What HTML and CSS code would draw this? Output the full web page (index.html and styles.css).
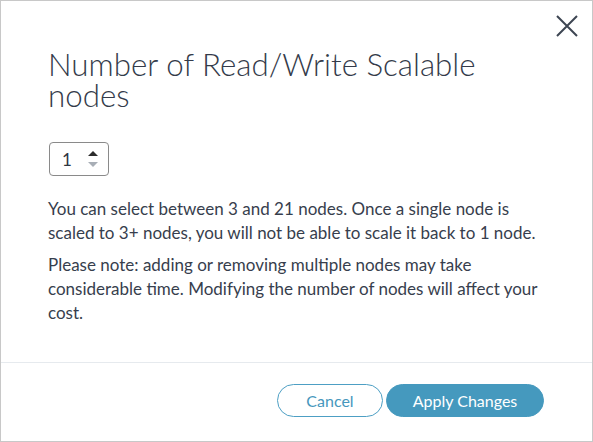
FILE: index.html
```html
<!DOCTYPE html>
<html>
<head>
<meta charset="utf-8">
<link rel="stylesheet" href="styles.css">
</head>
<body>
<div class="dialog">
  <div class="body">
    <button class="close" aria-label="Close">
      <svg width="22" height="22" viewBox="0 0 22 22"><path d="M1 1L21 21M21 1L1 21" stroke="#3d4552" stroke-width="2" fill="none"/></svg>
    </button>
    <h1 class="title">Number of Read/Write Scalable nodes</h1>
    <div class="stepper">
      <span class="value">1</span>
      <span class="arrows">
        <span class="up"></span>
        <span class="down"></span>
      </span>
    </div>
    <p class="text">You can select between 3 and 21 nodes. Once a single node is scaled to 3+ nodes, you will not be able to scale it back to 1 node.</p>
    <p class="text">Please note: adding or removing multiple nodes may take considerable time. Modifying the number of nodes will affect your cost.</p>
  </div>
  <div class="footer">
    <button class="btn btn-outline">Cancel</button>
    <button class="btn btn-primary">Apply Changes</button>
  </div>
</div>
</body>
</html>
```
FILE: styles.css
```css
html, body {
  margin: 0;
  padding: 0;
  background: #ffffff;
}
.dialog {
  width: 593px;
  height: 442px;
  box-sizing: border-box;
  border: 1px solid #c8c8c8;
  display: flex;
  flex-direction: column;
  font-family: Lato, "Open Sans", sans-serif;
  color: #3a4150;
}
.body {
  position: relative;
  flex: 1;
  padding: 48px 40px 0 47px;
}
.close {
  position: absolute;
  top: 14px;
  right: 14px;
  background: none;
  border: 0;
  padding: 0;
  width: 22px;
  height: 22px;
  display: flex;
}
.title {
  margin: 0;
  font-weight: 300;
  font-size: 31.3px;
  line-height: 31px;
  color: #343b4a;
  max-width: 460px;
}
.stepper {
  margin-top: 31px;
  width: 60px;
  height: 34px;
  box-sizing: border-box;
  border: 1px solid #8a8a8a;
  border-radius: 4px;
  display: flex;
  align-items: center;
  justify-content: space-between;
  padding: 0 10px 0 12px;
  margin-left: 1px;
}
.value {
  font-size: 17px;
  color: #2f3542;
}
.arrows {
  display: flex;
  flex-direction: column;
  gap: 6px;
}
.up {
  width: 0;
  height: 0;
  border-left: 5px solid transparent;
  border-right: 5px solid transparent;
  border-bottom: 5px solid #2c2c2c;
}
.down {
  width: 0;
  height: 0;
  border-left: 5px solid transparent;
  border-right: 5px solid transparent;
  border-top: 5px solid #a8aeb6;
}
.text {
  margin: 0;
  font-size: 17px;
  line-height: 24px;
  color: #373e4d;
}
.stepper + .text {
  margin-top: 21px;
}
.text + .text {
  margin-top: 8px;
}
.footer {
  height: 79px;
  border-top: 1px solid #e6eaee;
  display: flex;
  justify-content: flex-end;
  align-items: flex-start;
  gap: 3px;
  padding: 21px 48px 0 0;
  box-sizing: border-box;
}
.btn {
  height: 33px;
  border-radius: 17px;
  font-family: Lato, "Open Sans", sans-serif;
  font-size: 16px;
  padding: 0;
  cursor: pointer;
}
.btn-outline {
  width: 106px;
  background: #ffffff;
  border: 1px solid #4d9fc4;
  color: #4697bd;
}
.btn-primary {
  width: 158px;
  background: #4599be;
  border: 1px solid #4599be;
  color: #ffffff;
}
```
